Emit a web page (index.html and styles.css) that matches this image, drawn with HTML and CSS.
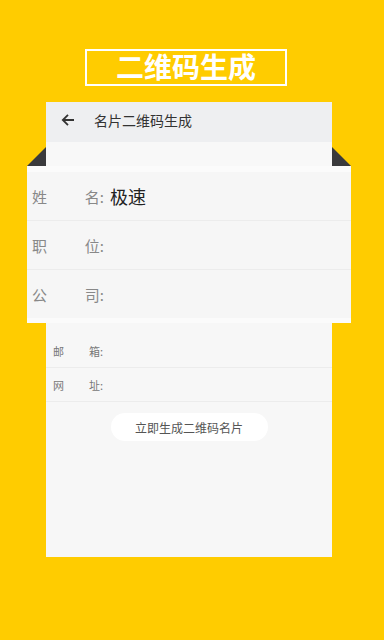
FILE: index.html
```html
<!DOCTYPE html>
<html lang="zh-CN">
<head>
    <meta charset="UTF-8">
    <meta name="viewport" content="width=device-width, initial-scale=1.0">
    <title>二维码生成</title>
    <link rel="stylesheet" href="styles.css">
</head>
<body>
    <div class="page">
        <div class="title">二维码生成</div>

        <div class="phone">
            <!-- Toolbar -->
            <div class="toolbar">
                <svg class="back" width="14" height="14" viewBox="0 0 14 14">
                    <path d="M13 7H2M7 1.8L1.8 7 7 12.2" fill="none" stroke="#333" stroke-width="1.8"/>
                </svg>
                <span class="toolbar-title">名片二维码生成</span>
            </div>
            <div class="spacer"></div>

            <!-- Enlarged card over the form -->
            <div class="card">
                <div class="card-row">
                    <div class="card-label"><span>姓</span><span>名:</span></div>
                    <div class="card-value">极速</div>
                </div>
                <div class="card-row">
                    <div class="card-label"><span>职</span><span>位:</span></div>
                </div>
                <div class="card-row">
                    <div class="card-label"><span>公</span><span>司:</span></div>
                </div>
            </div>

            <!-- Remaining form rows -->
            <div class="form">
                <div class="form-row">
                    <div class="form-label"><span>邮</span><span>箱:</span></div>
                </div>
                <div class="form-row">
                    <div class="form-label"><span>网</span><span>址:</span></div>
                </div>
                <button class="btn-generate">立即生成二维码名片</button>
            </div>
        </div>
    </div>
</body>
</html>
```

FILE: styles.css
```css
/* Basic setup */
* {
    margin: 0;
    padding: 0;
    box-sizing: border-box;
}

body {
    font-family: "Noto Sans CJK SC", "Noto Sans", sans-serif;
    background-color: #ffcc00;
    width: 384px;
    height: 640px;
    overflow: hidden;
}

.page {
    padding-top: 49px;
}

/* Heading */
.title {
    margin-left: 85px;
    width: 202px;
    height: 37px;
    border: 2px solid #fff;
    color: #fff;
    font-size: 28px;
    font-weight: bold;
    line-height: 31px;
    text-align: center;
}

/* Phone screen */
.phone {
    margin: 16px 0 0 46px;
    width: 286px;
    height: 455px;
    background-color: #f7f7f7;
}

.toolbar {
    display: flex;
    align-items: center;
    height: 40px;
    padding: 0 0 4px 15px;
    background-color: #eeeff1;
}

.back {
    display: block;
}

.toolbar-title {
    margin-left: 19px;
    font-size: 14px;
    color: #333;
}

.spacer {
    height: 24px;
    background-color: #f8f8f8;
}

/* Enlarged card */
.card {
    position: relative;
    margin: 0 -19px;
    padding: 6px 0 5px;
    background-color: #fbfbfb;
}

.card::before,
.card::after {
    content: "";
    position: absolute;
    top: -19px;
    width: 0;
    height: 0;
    border-bottom: 19px solid #3a3a3c;
}

.card::before {
    left: 0;
    border-left: 19px solid transparent;
}

.card::after {
    right: 0;
    border-right: 19px solid transparent;
}

.card-row {
    display: flex;
    align-items: center;
    height: 49px;
    padding-left: 5px;
    background-color: #f6f6f6;
    border-bottom: 1px solid #ececec;
}

.card-row:last-child {
    height: 48px;
    border-bottom: none;
}

.card-label {
    display: flex;
    justify-content: space-between;
    width: 72px;
    font-size: 15px;
    color: #888;
}

.card-value {
    margin-left: 6px;
    font-size: 18px;
    color: #222;
}

/* Small form rows */
.form {
    padding-top: 11px;
}

.form-row {
    display: flex;
    align-items: center;
    height: 34px;
    padding-left: 7px;
    border-bottom: 1px solid #ececec;
}

.form-label {
    display: flex;
    justify-content: space-between;
    width: 50px;
    font-size: 11px;
    color: #777;
}

.btn-generate {
    display: block;
    margin: 11px auto 0;
    width: 157px;
    height: 28px;
    border: none;
    border-radius: 14px;
    background-color: #fff;
    font-family: inherit;
    font-size: 12px;
    color: #555;
}
```
